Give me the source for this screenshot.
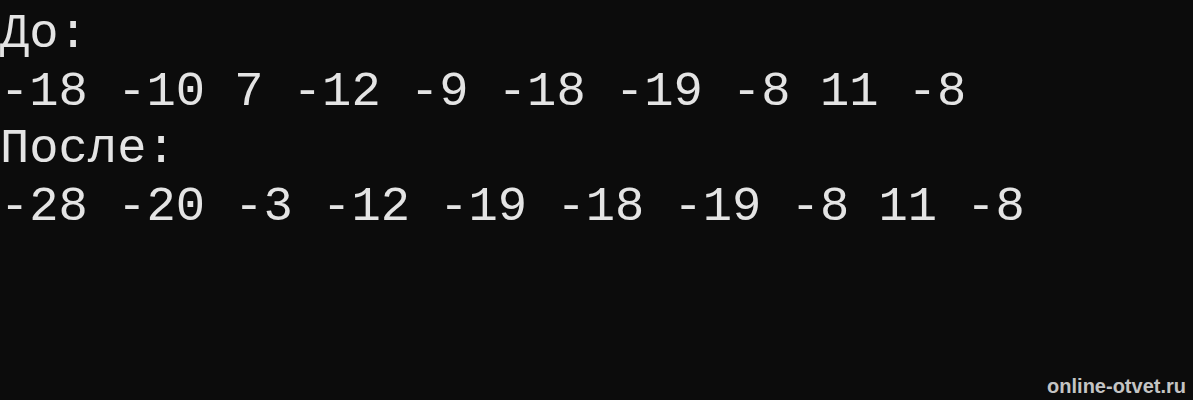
const lines = [
  "До:",
  "-18 -10 7 -12 -9 -18 -19 -8 11 -8",
  "После:",
  "-28 -20 -3 -12 -19 -18 -19 -8 11 -8",
];

export default function App() {
  return (
    <div className="relative w-[1193px] h-[400px] overflow-hidden bg-[#0c0c0c]">
      <div className="pt-[6px] font-['Liberation_Mono',monospace] text-[48.8px] leading-[57.7px] text-[#e4e4e4] whitespace-pre">
        {lines.map((line, i) => (
          <div key={i}>{line}</div>
        ))}
      </div>
      {/* watermark */}
      <div className="absolute right-[7px] bottom-[4px] font-['Liberation_Sans',Arial,sans-serif] text-[20px] leading-none font-bold text-[#c4c4c4]">
        online-otvet.ru
      </div>
    </div>
  );
}
